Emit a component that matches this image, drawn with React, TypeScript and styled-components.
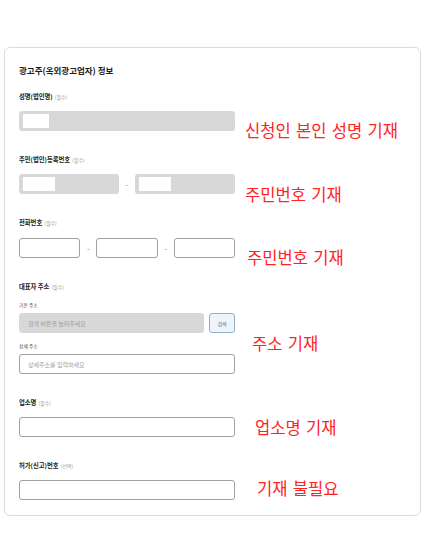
import React from 'react';
import styled, { createGlobalStyle } from 'styled-components';

const Global = createGlobalStyle`
  html, body { margin: 0; padding: 0; background: #fff; }
  body { font-family: "Noto Sans CJK KR", "Noto Sans", sans-serif; }
  * { box-sizing: border-box; }
`;

const Page = styled.div`
  position: relative;
  width: 425px;
  height: 560px;
  padding: 47px 4px 0 4px;
`;

const Card = styled.section`
  width: 417px;
  border: 1px solid #dcdcdc;
  border-radius: 6px;
  background: #fff;
  padding: 16px 14px 15px 14px;
`;

const Title = styled.h2`
  margin: 0;
  font-size: 8.5px;
  line-height: 12px;
  font-weight: 700;
  color: #1e1e1e;
`;

const Form = styled.div`
  margin-top: 16px;
  width: 216px;
  display: flex;
  flex-direction: column;
  gap: 24px;
`;

const Field = styled.div<{ $gap?: number }>`
  display: flex;
  flex-direction: column;
  gap: ${p => p.$gap ?? 9}px;
`;

const Label = styled.div`
  font-size: 6.3px;
  line-height: 10px;
  font-weight: 700;
  color: #222;
  white-space: nowrap;
`;

const Hint = styled.span`
  margin-left: 2px;
  font-size: 5px;
  font-weight: 400;
  color: #9a9a9a;
`;

const SubGroup = styled.div`
  display: flex;
  flex-direction: column;
  gap: 4px;
`;

const Sub = styled.div`
  font-size: 4.8px;
  line-height: 8px;
  color: #444;
`;

const Box = styled.div`
  height: 20px;
  border-radius: 3px;
  background: #d8d8d8;
  display: flex;
  align-items: center;
  padding-left: 4px;
  min-width: 0;
`;

const Mask = styled.span<{ $w: number }>`
  display: block;
  width: ${p => p.$w}px;
  height: 14px;
  background: #fff;
`;

const Input = styled.input<{ $gray?: boolean }>`
  display: block;
  width: 100%;
  min-width: 0;
  height: 20px;
  margin: 0;
  border-radius: 3px;
  border: 1px solid ${p => (p.$gray ? '#d8d8d8' : '#a0a0a0')};
  background: ${p => (p.$gray ? '#d8d8d8' : '#fff')};
  padding: 0 0 0 8px;
  font-family: inherit;
  font-size: 6px;
  color: #333;
  outline: none;
  &::placeholder { color: ${p => (p.$gray ? '#a0a0a0' : '#a0a0a0')}; }
`;

const Split = styled.div<{ $cols: string }>`
  display: grid;
  grid-template-columns: ${p => p.$cols};
  align-items: center;
`;

const Dash = styled.span`
  text-align: center;
  font-size: 8px;
  color: #8a8a8a;
`;

const SearchRow = styled.div`
  display: grid;
  grid-template-columns: 1fr 26px;
  gap: 5px;
`;

const SearchButton = styled.button`
  height: 20px;
  margin: 0;
  padding: 0;
  border: 1px solid #8fb0cc;
  border-radius: 3px;
  background: #eef4fa;
  font-family: inherit;
  font-size: 5px;
  color: #4d6c8c;
`;

const Note = styled.div<{ $x: number; $y: number }>`
  position: absolute;
  left: ${p => p.$x}px;
  top: ${p => p.$y - 10}px;
  font-family: "Noto Sans CJK KR", sans-serif;
  font-size: 16.6px;
  line-height: 20px;
  word-spacing: 1.5px;
  color: #ff2424;
  white-space: nowrap;
`;

const notes = [
  { x: 245, y: 130, t: '신청인 본인 성명 기재' },
  { x: 245, y: 194, t: '주민번호 기재' },
  { x: 247, y: 257, t: '주민번호 기재' },
  { x: 252, y: 343, t: '주소 기재' },
  { x: 255, y: 427, t: '업소명 기재' },
  { x: 257, y: 488, t: '기재 불필요' },
];

export default function App() {
  return (
    <Page>
      <Global />
      <Card>
        <Title>광고주(옥외광고업자) 정보</Title>
        <Form>
          <Field>
            <Label>성명(법인명)<Hint>(필수)</Hint></Label>
            <Box><Mask $w={26} /></Box>
          </Field>
          <Field>
            <Label>주민(법인)등록번호<Hint>(필수)</Hint></Label>
            <Split $cols="1fr 16px 1fr">
              <Box><Mask $w={32} /></Box>
              <Dash>-</Dash>
              <Box><Mask $w={32} /></Box>
            </Split>
          </Field>
          <Field $gap={10}>
            <Label>전화번호<Hint>(필수)</Hint></Label>
            <Split $cols="1fr 16px 1fr 16px 1fr">
              <Input />
              <Dash>-</Dash>
              <Input />
              <Dash>-</Dash>
              <Input />
            </Split>
          </Field>
          <Field $gap={9}>
            <Label>대표자 주소<Hint>(필수)</Hint></Label>
            <SubGroup>
              <Sub>기본 주소</Sub>
              <SearchRow>
                <Input $gray readOnly placeholder="검색 버튼을 눌러주세요" />
                <SearchButton type="button">검색</SearchButton>
              </SearchRow>
            </SubGroup>
            <SubGroup>
              <Sub>상세 주소</Sub>
              <Input placeholder="상세주소를 입력하세요" />
            </SubGroup>
          </Field>
          <Field>
            <Label>업소명<Hint>(필수)</Hint></Label>
            <Input />
          </Field>
          <Field>
            <Label>허가(신고)번호<Hint>(선택)</Hint></Label>
            <Input />
          </Field>
        </Form>
      </Card>
      {notes.map((n, i) => (
        <Note key={i} $x={n.x} $y={n.y}>{n.t}</Note>
      ))}
    </Page>
  );
}
